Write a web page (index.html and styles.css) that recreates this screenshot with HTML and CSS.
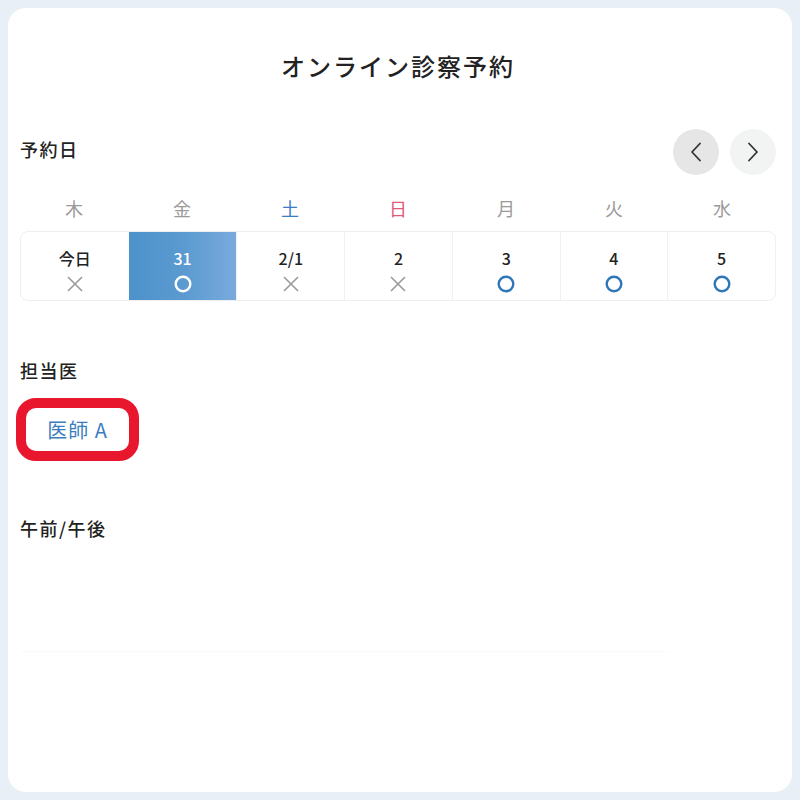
FILE: index.html
```html
<!DOCTYPE html>
<html lang="ja">
<head>
<meta charset="utf-8">
<title>オンライン診察予約</title>
<link rel="stylesheet" href="styles.css">
</head>
<body>
<div class="card">
  <h1 class="title">オンライン診察予約</h1>

  <div class="section-head">
    <h2 class="label">予約日</h2>
    <div class="nav">
      <button class="nav-btn prev" aria-label="前へ">
        <svg width="12" height="20" viewBox="0 0 12 20"><path d="M10 1.5 L2 10 L10 18.5" fill="none" stroke="#333" stroke-width="1.8" stroke-linecap="round" stroke-linejoin="round"/></svg>
      </button>
      <button class="nav-btn next" aria-label="次へ">
        <svg width="12" height="20" viewBox="0 0 12 20"><path d="M2 1.5 L10 10 L2 18.5" fill="none" stroke="#333" stroke-width="1.8" stroke-linecap="round" stroke-linejoin="round"/></svg>
      </button>
    </div>
  </div>

  <div class="weekdays">
    <span>木</span><span>金</span><span class="sat">土</span><span class="sun">日</span><span>月</span><span>火</span><span>水</span>
  </div>

  <div class="dates">
    <div class="date">
      <span class="num">今日</span>
      <svg class="mark" width="18" height="18" viewBox="0 0 18 18"><path d="M2 2 L16 16 M16 2 L2 16" stroke="#9b9b9b" stroke-width="1.6"/></svg>
    </div>
    <div class="date selected">
      <span class="num">31</span>
      <svg class="mark" width="18" height="18" viewBox="0 0 18 18"><circle cx="9" cy="9" r="7.3" fill="none" stroke="#fff" stroke-width="2.4"/></svg>
    </div>
    <div class="date">
      <span class="num">2/1</span>
      <svg class="mark" width="18" height="18" viewBox="0 0 18 18"><path d="M2 2 L16 16 M16 2 L2 16" stroke="#9b9b9b" stroke-width="1.6"/></svg>
    </div>
    <div class="date">
      <span class="num">2</span>
      <svg class="mark" width="18" height="18" viewBox="0 0 18 18"><path d="M2 2 L16 16 M16 2 L2 16" stroke="#9b9b9b" stroke-width="1.6"/></svg>
    </div>
    <div class="date">
      <span class="num">3</span>
      <svg class="mark" width="18" height="18" viewBox="0 0 18 18"><circle cx="9" cy="9" r="7.3" fill="none" stroke="#2f76b8" stroke-width="2.4"/></svg>
    </div>
    <div class="date">
      <span class="num">4</span>
      <svg class="mark" width="18" height="18" viewBox="0 0 18 18"><circle cx="9" cy="9" r="7.3" fill="none" stroke="#2f76b8" stroke-width="2.4"/></svg>
    </div>
    <div class="date">
      <span class="num">5</span>
      <svg class="mark" width="18" height="18" viewBox="0 0 18 18"><circle cx="9" cy="9" r="7.3" fill="none" stroke="#2f76b8" stroke-width="2.4"/></svg>
    </div>
  </div>

  <h2 class="label doctor-label">担当医</h2>
  <div class="doctors">
    <button class="doctor-btn">医師 A<span class="highlight"></span></button>
  </div>

  <h2 class="label time-label">午前/午後</h2>
  <div class="slots"></div>
</div>
</body>
</html>
```

FILE: styles.css
```css
* { box-sizing: border-box; }

html, body {
  margin: 0;
  padding: 0;
  background: #e8eff7;
}

body {
  padding: 8px;
  font-family: "Noto Sans CJK JP", "Noto Sans", sans-serif;
  color: #222;
}

.card {
  height: 784px;
  background: #fff;
  border-radius: 18px;
  padding: 42px 16px 0 12px;
}

.title {
  margin: 0;
  text-align: center;
  font-size: 24px;
  line-height: 32px;
  font-weight: 500;
  letter-spacing: 2px;
  color: #222;
}

.section-head {
  margin-top: 47px;
  display: flex;
  align-items: center;
  justify-content: space-between;
  height: 46px;
}

.section-head .label {
  margin-top: -6px;
}

.label {
  margin: 0;
  font-size: 18px;
  line-height: 26px;
  font-weight: 500;
  letter-spacing: 1.5px;
  color: #222;
}

.nav {
  display: flex;
  gap: 11px;
}

.nav-btn {
  width: 46px;
  height: 46px;
  border-radius: 50%;
  border: none;
  padding: 0;
  display: flex;
  align-items: center;
  justify-content: center;
  background: #f2f3f3;
}

.nav-btn.prev {
  background: #e6e6e6;
}

.weekdays {
  margin-top: 19px;
  display: grid;
  grid-template-columns: repeat(7, 1fr);
  text-align: center;
  font-size: 18px;
  line-height: 28px;
  color: #9a9a9a;
}

.weekdays .sat { color: #3a7dc0; }
.weekdays .sun { color: #e2587a; }

.dates {
  margin-top: 9px;
  display: grid;
  grid-template-columns: repeat(7, 1fr);
  height: 70px;
  border: 1px solid #efefef;
  border-radius: 8px;
  overflow: hidden;
}

.date {
  display: flex;
  flex-direction: column;
  align-items: center;
  padding-top: 16px;
  gap: 7px;
  border-left: 1px solid #f0f0f0;
}

.date:first-child {
  border-left: none;
}

.date .num {
  font-size: 16px;
  line-height: 20px;
  font-weight: 500;
  color: #222;
}

.date.selected {
  background: linear-gradient(90deg, #4d92cb 0%, #5a9ad0 50%, #7aaadd 100%);
  border-left: none;
}

.date.selected .num {
  color: #fff;
}

.doctor-label {
  margin-top: 56px;
}

.doctors {
  margin-top: 19px;
  display: flex;
}

.doctor-btn {
  position: relative;
  width: 115px;
  height: 55px;
  border: 1px solid #dde3ea;
  border-radius: 12px;
  background: #fff;
  font-family: inherit;
  font-size: 20px;
  font-weight: 400;
  color: #3a7ec0;
  letter-spacing: 1px;
  padding: 0;
}

.highlight {
  position: absolute;
  left: -5px;
  top: -5px;
  width: 123px;
  height: 63px;
  border: 10px solid #e8172e;
  border-radius: 20px;
}

.time-label {
  margin-top: 58px;
}

.slots {
  margin-top: 110px;
  width: 650px;
  border-top: 1px solid #fafafa;
}
```
